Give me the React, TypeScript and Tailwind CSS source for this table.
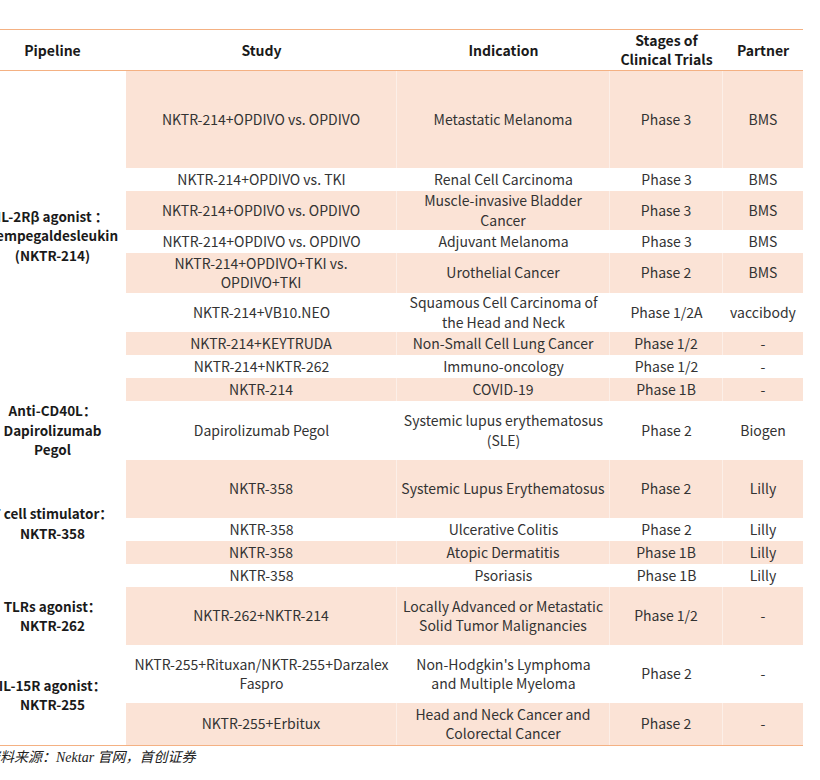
import React from "react";

const SH = "bg-[#fbe3d6]";

type Row = { h: number; shaded: boolean; cells: React.ReactNode[] };

const br = (a: string, b: string) => (
  <>
    {a}
    <br />
    {b}
  </>
);

const rows: Row[] = [
  { h: 97, shaded: true, cells: ["NKTR-214+OPDIVO vs. OPDIVO", "Metastatic Melanoma", "Phase 3", "BMS"] },
  { h: 23, shaded: false, cells: ["NKTR-214+OPDIVO vs. TKI", "Renal Cell Carcinoma", "Phase 3", "BMS"] },
  { h: 39, shaded: true, cells: ["NKTR-214+OPDIVO vs. OPDIVO", br("Muscle-invasive Bladder", "Cancer"), "Phase 3", "BMS"] },
  { h: 23, shaded: false, cells: ["NKTR-214+OPDIVO vs. OPDIVO", "Adjuvant Melanoma", "Phase 3", "BMS"] },
  { h: 40, shaded: true, cells: [br("NKTR-214+OPDIVO+TKI vs.", "OPDIVO+TKI"), "Urothelial Cancer", "Phase 2", "BMS"] },
  { h: 39, shaded: false, cells: ["NKTR-214+VB10.NEO", br("Squamous Cell Carcinoma of", "the Head and Neck"), "Phase 1/2A", "vaccibody"] },
  { h: 23, shaded: true, cells: ["NKTR-214+KEYTRUDA", "Non-Small Cell Lung Cancer", "Phase 1/2", "-"] },
  { h: 23, shaded: false, cells: ["NKTR-214+NKTR-262", "Immuno-oncology", "Phase 1/2", "-"] },
  { h: 23, shaded: true, cells: ["NKTR-214", "COVID-19", "Phase 1B", "-"] },
  { h: 59, shaded: false, cells: ["Dapirolizumab Pegol", br("Systemic lupus erythematosus", "(SLE)"), "Phase 2", "Biogen"] },
  { h: 58, shaded: true, cells: ["NKTR-358", "Systemic Lupus Erythematosus", "Phase 2", "Lilly"] },
  { h: 23, shaded: false, cells: ["NKTR-358", "Ulcerative Colitis", "Phase 2", "Lilly"] },
  { h: 23, shaded: true, cells: ["NKTR-358", "Atopic Dermatitis", "Phase 1B", "Lilly"] },
  { h: 23, shaded: false, cells: ["NKTR-358", "Psoriasis", "Phase 1B", "Lilly"] },
  { h: 58, shaded: true, cells: ["NKTR-262+NKTR-214", br("Locally Advanced or Metastatic", "Solid Tumor Malignancies"), "Phase 1/2", "-"] },
  { h: 58, shaded: false, cells: [br("NKTR-255+Rituxan/NKTR-255+Darzalex", "Faspro"), br("Non-Hodgkin's Lymphoma", "and Multiple Myeloma"), "Phase 2", "-"] },
  { h: 42, shaded: true, cells: ["NKTR-255+Erbitux", br("Head and Neck Cancer and", "Colorectal Cancer"), "Phase 2", "-"] },
];

function Pipe({ lines, span }: { lines: string[]; span: string }) {
  return (
    <div className={`${span} flex flex-col items-center justify-center font-bold text-[13.5px] leading-[19.5px] text-[#1a1a1a] whitespace-nowrap`}>
      {lines.map((l, i) => (
        <span key={i}>{l}</span>
      ))}
    </div>
  );
}

export default function App() {
  const pipelines: Record<number, React.ReactNode> = {
    0: <Pipe key="p0" span="row-span-9" lines={["IL-2Rβ agonist ：", "Bempegaldesleukin", "(NKTR-214)"]} />,
    9: <Pipe key="p9" span="row-span-1" lines={["Anti-CD40L：", "Dapirolizumab", "Pegol"]} />,
    10: <Pipe key="p10" span="row-span-4" lines={["T cell stimulator：", "NKTR-358"]} />,
    14: <Pipe key="p14" span="row-span-1" lines={["TLRs agonist：", "NKTR-262"]} />,
    15: <Pipe key="p15" span="row-span-2" lines={["IL-15R agonist：", "NKTR-255"]} />,
  };

  const items: React.ReactNode[] = [];
  rows.forEach((r, ri) => {
    if (pipelines[ri]) items.push(pipelines[ri]);
    r.cells.forEach((c, ci) => {
      items.push(
        <div
          key={`${ri}-${ci}`}
          style={{ height: r.h }}
          className={`flex items-center justify-center text-center whitespace-nowrap text-[14px] leading-[19.5px] text-[#333333] ${
            r.shaded ? SH + (ci < 3 ? " border-r border-[#fcefe8]" : "") : ""
          }`}
        >
          <span>{c}</span>
        </div>
      );
    });
  });

  return (
    <div className="w-[820px] h-[780px] bg-white overflow-hidden" style={{ fontFamily: '"Noto Sans CJK SC", "Noto Sans", sans-serif' }}>
      <div className="w-[824px] -ml-[21px] pt-[29px]">
        <div className="border-t border-[#f4b183]">
          <div className="grid grid-cols-[147px_271px_213px_113px_80px] h-[41px] border-b-[1.5px] border-[#f4b183] font-bold text-[14px] leading-[19px] text-[#1a1a1a]">
            <div className="flex items-center justify-center">Pipeline</div>
            <div className="flex items-center justify-center">Study</div>
            <div className="flex items-center justify-center">Indication</div>
            <div className="flex items-center justify-center text-center">
              Stages of
              <br />
              Clinical Trials
            </div>
            <div className="flex items-center justify-center">Partner</div>
          </div>
          <div className="grid grid-cols-[147px_271px_213px_113px_80px] border-b-[1.5px] border-[#f4b183]">
            {items}
          </div>
        </div>
        <div
          className="pl-[7px] pt-[1px] text-[14px] leading-[22px] italic text-[#222]"
          style={{ fontFamily: '"Liberation Serif", "Noto Sans CJK SC", serif' }}
        >
          资料来源：Nektar 官网，首创证券
        </div>
      </div>
    </div>
  );
}
